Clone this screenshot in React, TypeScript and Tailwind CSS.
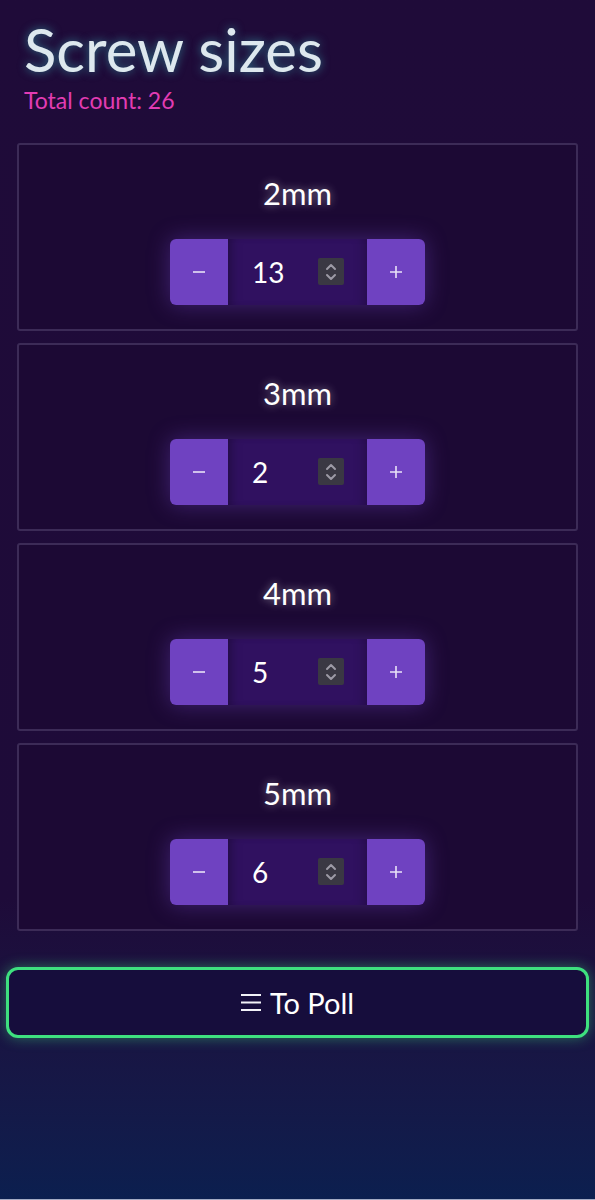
import React from "react";

const items = [
  { label: "2mm", value: 13 },
  { label: "3mm", value: 2 },
  { label: "4mm", value: 5 },
  { label: "5mm", value: 6 },
];

function Spinner() {
  return (
    <div className="flex h-[27px] w-[26px] items-center justify-center rounded-[2px] bg-[#3a3843]">
      <svg width="14" height="22" viewBox="0 0 14 22" fill="none" stroke="#9d9aa6" strokeWidth="2" strokeLinecap="round" strokeLinejoin="round">
        <path d="M3 8 L7 4 L11 8" />
        <path d="M3 14 L7 18 L11 14" />
      </svg>
    </div>
  );
}

function Stepper({ value }: { value: number }) {
  return (
    <div className="flex h-[66px] w-[255px] rounded-[6px] shadow-[0_0_22px_rgba(111,66,193,0.45)]">
      <button className="flex w-[58px] items-center justify-center rounded-l-[6px] bg-[#6f42c1] text-[22px] text-white">
        <svg width="14" height="14" viewBox="0 0 14 14" stroke="#e9e2f7" strokeWidth="1.6">
          <path d="M1 7 H13" />
        </svg>
      </button>
      <div className="flex flex-1 items-center justify-between bg-[#301160] pl-[24px] pr-[23px] shadow-[inset_10px_0_12px_-8px_rgba(0,0,0,0.35),inset_-10px_0_12px_-8px_rgba(0,0,0,0.25)]">
        <span className="text-[28px] leading-none text-white">{value}</span>
        <Spinner />
      </div>
      <button className="flex w-[58px] items-center justify-center rounded-r-[6px] bg-[#6f42c1] text-white">
        <svg width="14" height="14" viewBox="0 0 14 14" stroke="#e9e2f7" strokeWidth="1.6">
          <path d="M1 7 H13 M7 1 V13" />
        </svg>
      </button>
    </div>
  );
}

export default function App() {
  return (
    <div style={{ fontFamily: "Lato, 'Noto Sans', sans-serif" }}>
      <div className="flex h-[1199px] flex-col bg-gradient-to-b from-[#1f0b39] via-[#1e0b39] via-75% to-[#0b1f4f]">
        <div className="px-[24px] pt-[13px]">
          <h1 className="text-[60px] leading-[1.2] text-[#dde8ee] [text-shadow:0_0_10px_rgba(64,210,210,0.55)]">
            Screw sizes
          </h1>
          <div className="mt-[2px] text-[23px] leading-[1.2] text-[#e23cb3]">Total count: 26</div>
        </div>
        <div className="mt-[28px] flex flex-col gap-[12px] px-[17px]">
          {items.map((it) => (
            <div
              key={it.label}
              className="flex flex-col items-center rounded-[3px] border-2 border-[#3c2b57] bg-[#1c0934] pt-[30px] pb-[24px]"
            >
              <div className="mb-[28px] text-[31px] leading-[36px] text-white [text-shadow:0_0_8px_rgba(255,255,255,0.45)]">
                {it.label}
              </div>
              <Stepper value={it.value} />
            </div>
          ))}
        </div>
        <div className="mt-[36px] px-[6px]">
          <button className="flex h-[71px] w-full items-center justify-center gap-[9px] rounded-[12px] border-[3px] border-[#3ee07f] bg-[#160d3c] text-[29px] text-white shadow-[0_0_14px_rgba(62,224,127,0.45)]">
            <svg width="20" height="17" viewBox="0 0 20 17" stroke="#f2f2f8" strokeWidth="1.8">
              <path d="M0 1 H20 M0 8.5 H20 M0 16 H20" />
            </svg>
            <span className="leading-none">To Poll</span>
          </button>
        </div>
      </div>
      <div className="h-px bg-[#a3abc4]" />
    </div>
  );
}
